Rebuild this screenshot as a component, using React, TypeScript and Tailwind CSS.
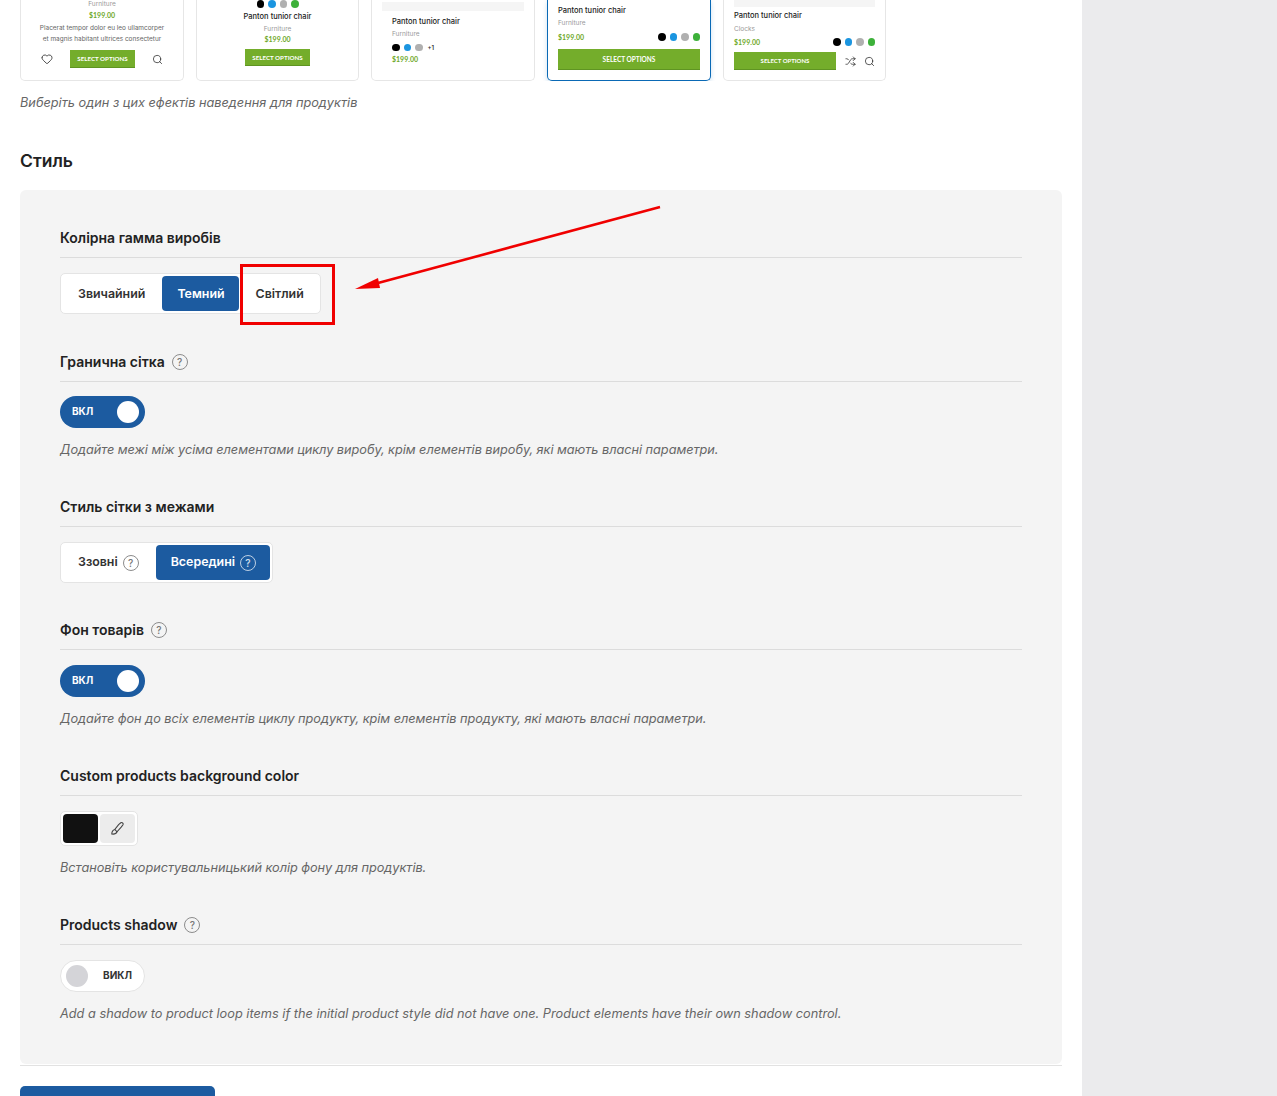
import { Heart, Search, Shuffle } from 'lucide-react';

const inter = { fontFamily: 'Inter, "Noto Sans", sans-serif' };

function Help({ light }: { light?: boolean }) {
  return (
    <span
      className={`inline-flex w-4 h-4 items-center justify-center rounded-full border text-[10px] font-medium leading-none ${
        light ? 'border-white/70 text-white/80' : 'border-[#8c8c8c] text-[#777]'
      }`}
    >
      ?
    </span>
  );
}

function Label({ text, help }: { text: string; help?: boolean }) {
  return (
    <div className="flex items-center gap-[7px] h-[30px] pb-[10px] border-b border-[#dcdcdc] mb-[15px]">
      <span className="text-[14px] leading-5 font-semibold text-[#222]">{text}</span>
      {help && <Help />}
    </div>
  );
}

function Desc({ children, tight }: { children: string; tight?: boolean }) {
  return (
    <p className={`pt-3 text-[12.75px] leading-[19px] italic text-[#666] ${tight ? 'tracking-[-0.05px]' : ''}`}>
      {children}
    </p>
  );
}

function Toggle({ on }: { on: boolean }) {
  if (on) {
    return (
      <div className="flex items-center justify-between w-[85px] h-8 rounded-full bg-[#1c5ba0] pl-3 pr-[6px]">
        <span className="pb-px text-[10px] font-bold text-white">ВКЛ</span>
        <span className="w-[22px] h-[22px] rounded-full bg-white" />
      </div>
    );
  }
  return (
    <div className="flex items-center justify-between w-[85px] h-8 rounded-full bg-white border border-[#e4e4e4] pl-[5px] pr-3">
      <span className="w-[22px] h-[22px] rounded-full bg-[#d4d4d8]" />
      <span className="pb-px text-[10px] font-bold text-[#333]">ВИКЛ</span>
    </div>
  );
}

function Dots({ more }: { more?: boolean }) {
  return (
    <div className="flex items-center gap-[4px]">
      <span className="w-[7.5px] h-[7.5px] rounded-full bg-black" />
      <span className="w-[7.5px] h-[7.5px] rounded-full bg-[#1b95e0]" />
      <span className="w-[7.5px] h-[7.5px] rounded-full bg-[#b0b0b0]" />
      {more ? (
        <span className="text-[6px] font-semibold text-[#333] ml-[1px]">+1</span>
      ) : (
        <span className="w-[7.5px] h-[7.5px] rounded-full bg-[#3db13a]" />
      )}
    </div>
  );
}

function Title({ children }: { children: string }) {
  return <div className="text-[7.5px] leading-[11px] font-medium text-[#222]">{children}</div>;
}
function Cat({ children }: { children: string }) {
  return <div className="text-[6.5px] leading-[10px] text-[#999]">{children}</div>;
}
function Price() {
  return <div className="text-[7px] leading-[10px] font-bold text-[#6fa92a]" style={{ fontFamily: 'Lato, sans-serif' }}>$199.00</div>;
}
function SelectBtn({ className }: { className: string }) {
  return (
    <div
      className={`flex items-center justify-center bg-[#74ad2b] border-b border-[#5f9422] text-white font-bold ${className}`}
      style={{ fontFamily: 'Lato, sans-serif' }}
    >
      SELECT OPTIONS
    </div>
  );
}

function ProductCards() {
  const card = 'flex flex-col justify-end h-[81px] rounded-b-[5px] border-x border-b border-[#e6e6e6] bg-white';
  return (
    <div className="flex gap-3 h-[81px] overflow-hidden" style={{ fontFamily: 'Inter, sans-serif' }}>
      <div className={`${card} w-[164px] items-center pb-[12px]`}>
        <Cat>Furniture</Cat>
        <div className="mt-[1px]"><Price /></div>
        <div className="mt-[3px] text-[6.45px] leading-[11px] text-[#666] text-center">
          Placerat tempor dolor eu leo ullamcorper
          <br />
          et magnis habitant ultrices consectetur
        </div>
        <div className="flex items-center justify-between w-[122px] mt-[5px]">
          <Heart size={12} strokeWidth={1.6} color="#222" />
          <SelectBtn className="w-[65px] h-[18px] text-[6.2px]" />
          <Search size={11} strokeWidth={1.6} color="#222" />
        </div>
      </div>
      <div className={`${card} w-[163px] items-center pb-[14px]`}>
        <Dots />
        <div className="mt-[3px]"><Title>Panton tunior chair</Title></div>
        <div className="mt-[2px]"><Cat>Furniture</Cat></div>
        <Price />
        <SelectBtn className="w-[65px] h-[18px] mt-[5px] pt-px text-[6.2px]" />
      </div>
      <div className={`${card} w-[164px] px-[10px] pb-[16px]`}>
        <div className="h-[9px] bg-[#f5f5f5] mb-[5px]" />
        <div className="pl-[10px]">
          <Title>Panton tunior chair</Title>
          <div className="mt-[2px]"><Cat>Furniture</Cat></div>
          <div className="mt-[4px]"><Dots more /></div>
          <div className="mt-[2px]"><Price /></div>
        </div>
      </div>
      <div className="flex flex-col justify-end w-[164px] h-[81px] rounded-b-[5px] border-x border-b border-[#0a69b5] bg-white px-[10px] pb-[10px] shadow-[0_2px_5px_rgba(10,105,181,0.2)]">
        <Title>Panton tunior chair</Title>
        <div className="mt-[2px]"><Cat>Furniture</Cat></div>
        <div className="flex items-center justify-between mt-[4px]">
          <Price />
          <Dots />
        </div>
        <SelectBtn className="h-[21px] mt-[7px] pt-px text-[6.5px]" />
      </div>
      <div className={`${card} w-[163px] px-[10px] pb-[10px]`}>
        <div className="h-[7px] bg-[#f5f5f5] mb-[3px]" />
        <Title>Panton tunior chair</Title>
        <div className="mt-[3px]"><Cat>Clocks</Cat></div>
        <div className="flex items-center justify-between mt-[3px]">
          <Price />
          <Dots />
        </div>
        <div className="flex items-center justify-between mt-[5px]">
          <SelectBtn className="w-[102px] h-[18px] text-[6px]" />
          <Shuffle size={11} strokeWidth={1.6} color="#222" />
          <Search size={11} strokeWidth={1.6} color="#222" />
        </div>
      </div>
    </div>
  );
}

function Segments({ items, active }: { items: { text: string; help?: boolean }[]; active: number }) {
  return (
    <div className="inline-flex gap-[2px] p-[2px] bg-white border border-[#e4e4e4] rounded-[5px]">
      {items.map((item, i) => (
        <div
          key={item.text}
          className={`flex items-center gap-[5px] h-[35px] pl-[15px] rounded-[4px] text-[12.4px] font-semibold ${
            i === 0 ? 'pr-[15px]' : 'pr-[14px]'
          } ${i === active ? 'bg-[#1c5ba0] text-white' : 'text-[#333]'}`}
        >
          <span className={item.help ? '' : 'pt-px'}>{item.text}</span>
          {item.help && <Help light={i === active} />}
        </div>
      ))}
    </div>
  );
}

export default function App() {
  return (
    <div className="relative flex h-[1096px] w-full overflow-hidden bg-white" style={inter}>
      <main className="w-[1082px] shrink-0 px-5">
        <ProductCards />
        <p className="pt-3 text-[12.75px] leading-[19px] italic text-[#666]">
          Виберіть один з цих ефектів наведення для продуктів
        </p>
        <h2 className="mt-[35px] text-[17.5px] leading-7 font-semibold text-[#222]">Стиль</h2>

        <div className="mt-[15px] rounded-md bg-[#f4f4f4] px-10 pt-[38px] pb-[41px] flex flex-col gap-[38px]">
          <section>
            <Label text="Колірна гамма виробів" />
            <Segments items={[{ text: 'Звичайний' }, { text: 'Темний' }, { text: 'Світлий' }]} active={1} />
          </section>
          <section>
            <Label text="Гранична сітка" help />
            <div className="-mt-px">
              <Toggle on />
            </div>
            <Desc tight>Додайте межі між усіма елементами циклу виробу, крім елементів виробу, які мають власні параметри.</Desc>
          </section>
          <section>
            <Label text="Стиль сітки з межами" />
            <Segments items={[{ text: 'Ззовні', help: true }, { text: 'Всередині', help: true }]} active={1} />
          </section>
          <section className="-mt-px">
            <Label text="Фон товарів" help />
            <Toggle on />
            <Desc tight>Додайте фон до всіх елементів циклу продукту, крім елементів продукту, які мають власні параметри.</Desc>
          </section>
          <section>
            <Label text="Custom products background color" />
            <div className="inline-flex gap-[2px] p-[2px] bg-white border border-[#e4e4e4] rounded-[5px] align-top">
              <div className="w-[35px] h-[29px] rounded-[4px] bg-[#111]" />
              <div className="flex w-[35px] h-[29px] items-center justify-center rounded-[4px] bg-[#ececec]">
                <svg width="15" height="15" viewBox="0 0 15 15" fill="none" stroke="#444" strokeWidth="1.1">
                  <path d="M8.6 3.6 L10.8 1.8 C12 1 13.8 2.4 13 3.8 L11.2 6.2 L7 10.8 L4.8 8.4 Z" />
                  <path d="M4.8 8.4 C3 9 1.8 10.4 1.8 13 C4.6 13.4 6.4 12.4 7 10.8" />
                </svg>
              </div>
            </div>
            <Desc tight>Встановіть користувальницький колір фону для продуктів.</Desc>
          </section>
          <section>
            <Label text="Products shadow" help />
            <Toggle on={false} />
            <Desc>Add a shadow to product loop items if the initial product style did not have one. Product elements have their own shadow control.</Desc>
          </section>
        </div>

        <div className="mt-px h-px bg-[#e2e2e2]" />
        <div className="mt-5 w-[195px] h-10 rounded-t-[5px] bg-[#1c5ba0]" />
      </main>
      <aside className="flex-1 bg-[#ebebed]" />

      {/* red annotation drawn on top of the screenshot */}
      <div className="absolute left-[240px] top-[264px] w-[95px] h-[61px] border-[3px] border-[#f00000]" />
      <svg className="absolute left-0 top-0" width="700" height="320" fill="none">
        <path d="M660 207 L378 283" stroke="#f00000" strokeWidth="2.6" />
        <path d="M355 289 L378 278 L380 288 Z" fill="#f00000" />
      </svg>
    </div>
  );
}
